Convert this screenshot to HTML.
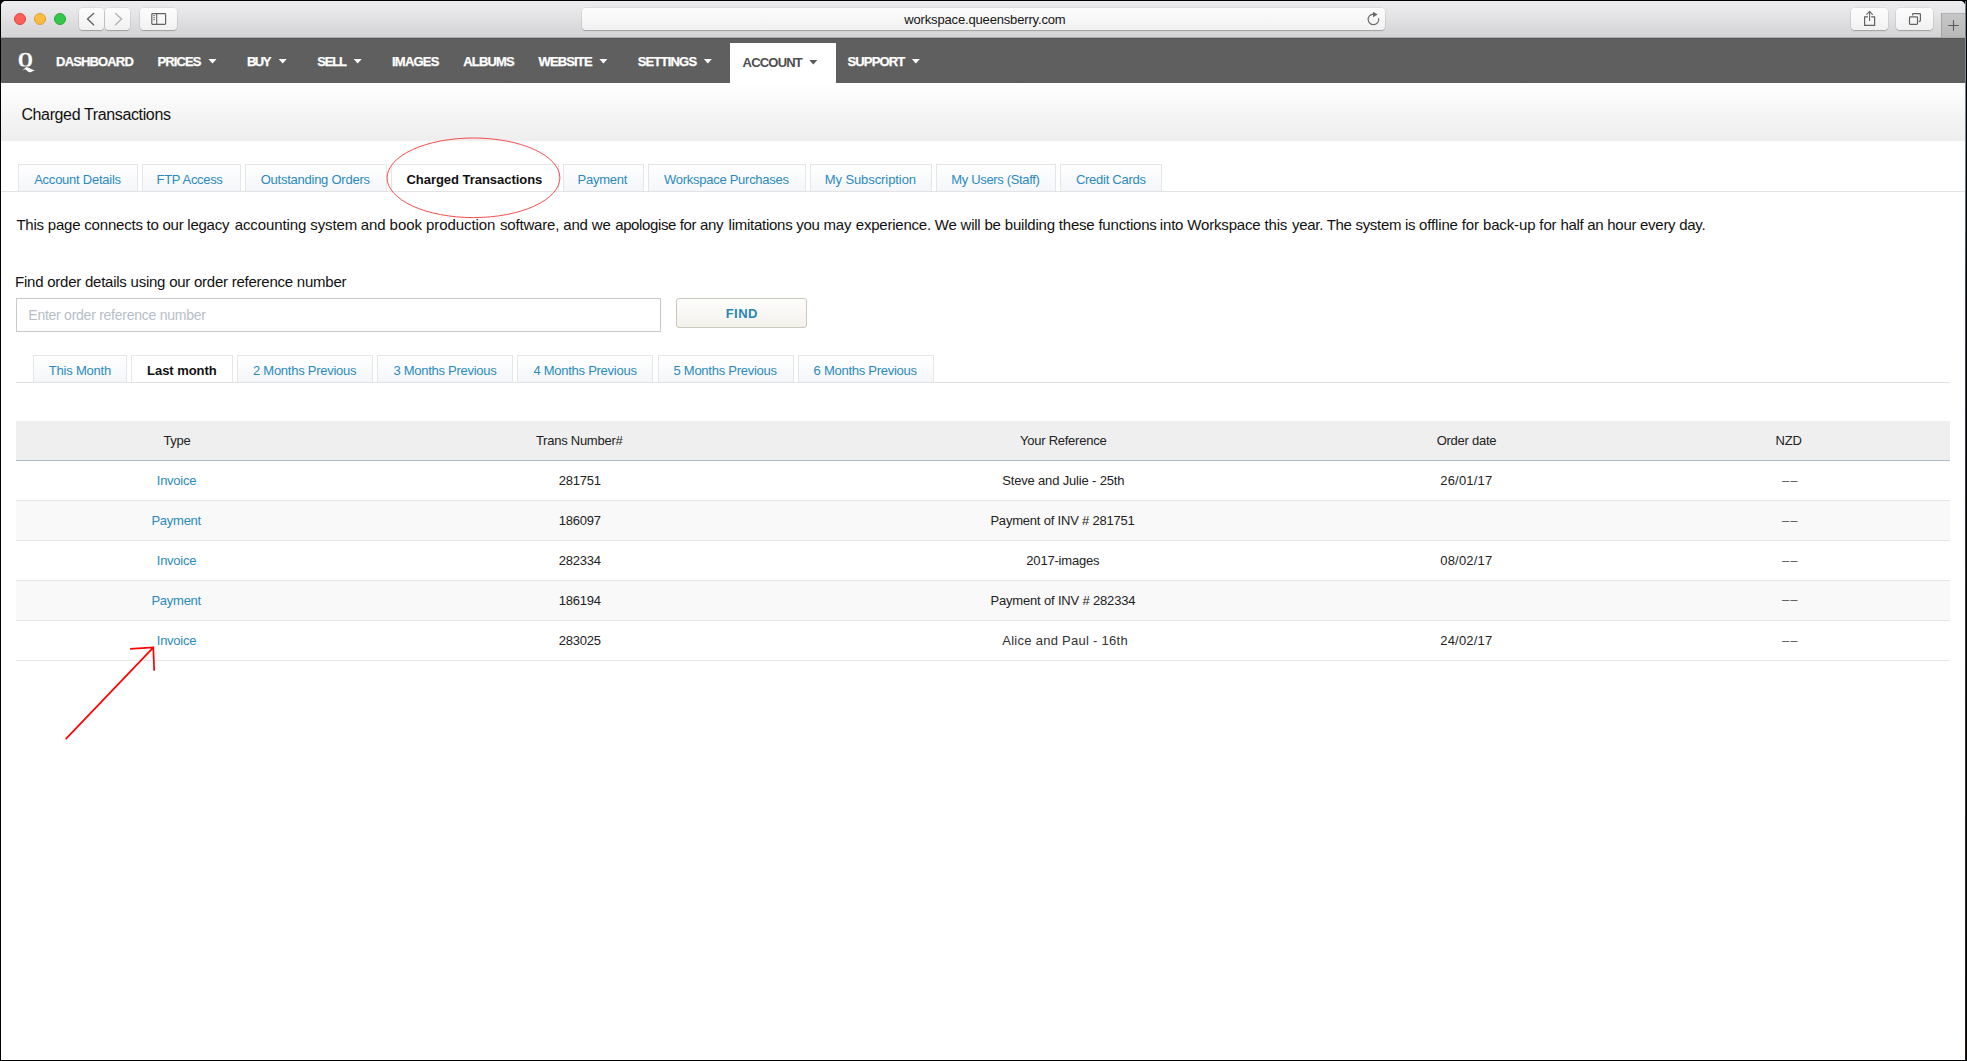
<!DOCTYPE html>
<html lang="en">
<head>
<meta charset="utf-8">
<title>Charged Transactions</title>
<style>
html,body{margin:0;padding:0;}
body{width:1967px;height:1061px;background:#000;position:relative;overflow:hidden;font-family:"Liberation Sans",sans-serif;}
.abs,.t,.win,.win div,.win svg{position:absolute;}
.t{white-space:nowrap;display:block;}
.win{left:1px;top:1px;width:1964px;height:1059px;background:#fff;border-radius:5px 5px 0 0;overflow:hidden;}
.edge{left:1965px;top:1px;width:1px;height:1059px;background:linear-gradient(#6f86a6 0,#6f86a6 140px,#3c4656 300px,#2a2a30 900px,#2a1a10 100%);}
.toolbar{left:0;top:0;width:1964px;height:36px;background:linear-gradient(#ececee 0,#e8e8ea 25%,#dbdbdd 70%,#d3d3d5 100%);border-bottom:1px solid #acacac;}
.tb-btn{background:linear-gradient(#fdfdfd,#f1f1f1);border-radius:4px;box-shadow:0 0 0 .5px rgba(0,0,0,.10),0 1px 1px rgba(0,0,0,.22);}
.dot{width:12px;height:12px;border-radius:50%;box-sizing:border-box;top:12px;}
.nav{left:0;top:37px;width:1964px;height:45px;background:#5f5f5f;border-top:1px solid #555;box-sizing:border-box;}
.titleband{left:0;top:82px;width:1964px;height:58px;background:linear-gradient(#ffffff 0,#fbfbfb 25%,#f2f2f2 70%,#eeeeee 100%);}
.tab{box-sizing:border-box;border:1px solid #e4e6e8;border-bottom:none;background:linear-gradient(#ffffff,#f4f6f9);top:163px;height:27px;}
.tab.on{background:#fff;}
.mtab{box-sizing:border-box;border:1px solid #e4e6e8;border-bottom:none;background:linear-gradient(#ffffff,#f4f6f9);top:354px;height:27px;}
.mtab.on{background:#fff;}
.hr{height:1px;background:#e3e3e3;}
</style>
</head>
<body>
<div class="win">
  <!-- Safari toolbar -->
  <div class="toolbar"></div>
  <div class="dot" style="left:13px;background:#fc605b;border:1px solid #e0443e;"></div>
  <div class="dot" style="left:33px;background:#fdbc40;border:1px solid #dea033;"></div>
  <div class="dot" style="left:53px;background:#34c84a;border:1px solid #27aa35;"></div>
  <div class="tb-btn" style="left:78px;top:7px;width:25px;height:22px;"></div>
  <div class="tb-btn" style="left:104px;top:7px;width:25px;height:22px;"></div>
  <div class="tb-btn" style="left:139px;top:7px;width:37px;height:22px;"></div>
  <div class="tb-btn" style="left:581px;top:7px;width:803px;height:22px;"></div>
  <div class="tb-btn" style="left:1850px;top:7px;width:37px;height:22px;"></div>
  <div class="tb-btn" style="left:1895px;top:7px;width:37px;height:22px;"></div>
  <div style="left:1940px;top:12px;width:24px;height:24px;background:linear-gradient(#c6c6c7,#b9b9ba);border-left:1px solid #a6a6a6;border-top:1px solid #b2b2b2;box-sizing:border-box;"></div>
  <svg style="left:0;top:0" width="1964" height="37" viewBox="1 1 1964 37" fill="none" stroke-linecap="round" stroke-linejoin="round">
    <!-- back / forward -->
    <path d="M93.6 13.5 L87.5 19 L93.6 24.8" stroke="#636363" stroke-width="1.4"/>
    <path d="M115.5 13.5 L121.6 19 L115.5 24.8" stroke="#b4b4b4" stroke-width="1.4"/>
    <!-- sidebar -->
    <rect x="151.8" y="13.7" width="13.8" height="10.7" rx="0.8" stroke="#636363" stroke-width="1.2"/>
    <path d="M156.7 13.7 V24.4" stroke="#636363" stroke-width="1.1"/>
    <path d="M153.3 15.6 H155 M153.3 17.6 H155 M153.3 19.6 H155" stroke="#636363" stroke-width="0.9" stroke-linecap="butt"/>
    <!-- reload -->
    <path d="M1378.7 18.6 A5.3 5.3 0 1 1 1373.2 14.1" stroke="#666" stroke-width="1.1"/>
    <path d="M1373 11.8 L1377.6 14.6 L1373 17.2 Z" fill="#666" stroke="none"/>
    <!-- share -->
    <path d="M1867.5 16.8 H1864.6 V25.3 H1874.6 V16.8 H1871.6" stroke="#636363" stroke-width="1.2" stroke-linejoin="miter"/>
    <path d="M1869.6 20.6 V11.6 M1866.8 14.3 L1869.6 11.4 L1872.4 14.3" stroke="#636363" stroke-width="1.1"/>
    <!-- tabs -->
    <rect x="1909.5" y="16.9" width="8" height="7.5" rx="0.8" stroke="#636363" stroke-width="1.2"/>
    <path d="M1912.6 15 V14.4 Q1912.6 13.6 1913.4 13.6 H1919.6 Q1920.4 13.6 1920.4 14.4 V20.6 Q1920.4 21.4 1919.6 21.4 H1919.2" stroke="#636363" stroke-width="1.2"/>
    <!-- plus -->
    <path d="M1948.2 25.5 H1958.8 M1953.5 20.2 V30.8" stroke="#5a5a5a" stroke-width="1.1" stroke-linecap="butt"/>
  </svg>

  <!-- site nav -->
  <div class="nav"></div>
  <div style="left:729px;top:42px;width:106px;height:40px;background:#fff;"></div>
  <span class="t" style="left:17.1px;top:44px;font-family:'Liberation Serif',serif;font-weight:700;font-size:20.5px;line-height:30px;color:#fff;transform:scaleX(.93);transform-origin:0 0;clip-path:inset(0 0 8.4px 0);-webkit-text-stroke:0.3px #fff;">Q</span>

  <svg style="left:0;top:0" width="1964" height="90" viewBox="1 1 1964 90">
    <path d="M22.2 70.9 Q24.2 68.2 26.2 66.9 Q28.8 67.4 31 69 Q33 70 34.9 70.3 Q32.5 71.5 30.6 72.2 Q29 72.7 27.6 71.3 Q26.2 69.6 25 69.3 Q24 69.4 22.2 70.9 Z" fill="#fff"/>
    <path d="M208.5 59 h8 l-4 4.6 z" fill="#fff"/>
    <path d="M278.7 59 h8 l-4 4.6 z" fill="#fff"/>
    <path d="M353.7 59 h8 l-4 4.6 z" fill="#fff"/>
    <path d="M599.4 59 h8 l-4 4.6 z" fill="#fff"/>
    <path d="M703.8 59 h8 l-4 4.6 z" fill="#fff"/>
    <path d="M809.3 60 h8 l-4 4.6 z" fill="#595959"/>
    <path d="M911.8 59 h8 l-4 4.6 z" fill="#fff"/>
  </svg>

  <!-- title band -->
  <div class="titleband"></div>

  <!-- account tabs -->
  <div class="hr" style="left:0;top:190px;width:1964px;"></div>
  <div class="tab" style="left:17px;width:120px;"></div>
  <div class="tab" style="left:141px;width:99px;"></div>
  <div class="tab" style="left:244px;width:142px;"></div>
  <div class="tab on" style="left:390px;width:168px;"></div>
  <div class="tab" style="left:562px;width:81px;"></div>
  <div class="tab" style="left:647px;width:158px;"></div>
  <div class="tab" style="left:809px;width:122px;"></div>
  <div class="tab" style="left:935px;width:120px;"></div>
  <div class="tab" style="left:1059px;width:102px;"></div>

  <!-- search -->
  <div style="left:15px;top:297px;width:645px;height:34px;box-sizing:border-box;border:1px solid #c9c9c9;background:#fff;"></div>
  <div style="left:675px;top:297px;width:131px;height:30px;box-sizing:border-box;border:1px solid #cbc7bb;border-radius:3px;background:linear-gradient(#fefefd,#f3f1ec);"></div>

  <!-- month tabs -->
  <div class="hr" style="left:15px;top:381px;width:1934px;"></div>
  <div class="mtab" style="left:32px;width:94px;"></div>
  <div class="mtab on" style="left:130px;width:102px;"></div>
  <div class="mtab" style="left:236px;width:136px;"></div>
  <div class="mtab" style="left:376px;width:136px;"></div>
  <div class="mtab" style="left:516px;width:136px;"></div>
  <div class="mtab" style="left:657px;width:136px;"></div>
  <div class="mtab" style="left:797px;width:136px;"></div>

  <!-- table -->
  <div style="left:15px;top:420px;width:1934px;height:39px;background:#efefef;border-bottom:1px solid #b4bcc6;"></div>
  <div style="left:15px;top:500px;width:1934px;height:39px;background:#f9f9f9;"></div>
  <div style="left:15px;top:580px;width:1934px;height:39px;background:#f9f9f9;"></div>
  <div class="hr" style="left:15px;top:499px;width:1934px;background:#e6e6e6;"></div>
  <div class="hr" style="left:15px;top:539px;width:1934px;background:#e6e6e6;"></div>
  <div class="hr" style="left:15px;top:579px;width:1934px;background:#e6e6e6;"></div>
  <div class="hr" style="left:15px;top:619px;width:1934px;background:#e6e6e6;"></div>
  <div class="hr" style="left:15px;top:659px;width:1934px;background:#e6e6e6;"></div>

  <!-- annotations -->
  <svg style="left:0;top:0" width="1964" height="1059" viewBox="1 1 1964 1059" fill="none">
    <ellipse cx="473.5" cy="177.8" rx="86.4" ry="39.8" stroke="#f24545" stroke-width="0.95"/>
    <path d="M65.7 739.1 L153.2 647.6 M130.1 648.9 L153.3 647.4 L154.2 670.8" stroke="#ff0000" stroke-width="1.7" stroke-linejoin="miter"/>
  </svg>
</div>
<div class="abs edge"></div>
<div id="text" class="abs" style="left:0;top:0;width:0;height:0;">
<span class="t" style="left:904.30px;top:11px;font-size:13px;line-height:18px;font-weight:400;color:#141414;letter-spacing:-0.162px">workspace.queensberry.com</span>
<span class="t" style="left:56.10px;top:53px;font-size:13px;line-height:18px;font-weight:700;color:#ffffff;letter-spacing:-0.851px;-webkit-text-stroke:.25px #fff">DASHBOARD</span>
<span class="t" style="left:157.50px;top:53px;font-size:13px;line-height:18px;font-weight:700;color:#ffffff;letter-spacing:-0.906px;-webkit-text-stroke:.25px #fff">PRICES</span>
<span class="t" style="left:247.00px;top:53px;font-size:13px;line-height:18px;font-weight:700;color:#ffffff;letter-spacing:-1.538px;-webkit-text-stroke:.25px #fff">BUY</span>
<span class="t" style="left:317.20px;top:53px;font-size:13px;line-height:18px;font-weight:700;color:#ffffff;letter-spacing:-1.194px;-webkit-text-stroke:.25px #fff">SELL</span>
<span class="t" style="left:392.00px;top:53px;font-size:13px;line-height:18px;font-weight:700;color:#ffffff;letter-spacing:-0.782px;-webkit-text-stroke:.25px #fff">IMAGES</span>
<span class="t" style="left:463.30px;top:53px;font-size:13px;line-height:18px;font-weight:700;color:#ffffff;letter-spacing:-0.847px;-webkit-text-stroke:.25px #fff">ALBUMS</span>
<span class="t" style="left:538.60px;top:53px;font-size:13px;line-height:18px;font-weight:700;color:#ffffff;letter-spacing:-0.875px;-webkit-text-stroke:.25px #fff">WEBSITE</span>
<span class="t" style="left:637.70px;top:53px;font-size:13px;line-height:18px;font-weight:700;color:#ffffff;letter-spacing:-0.805px;-webkit-text-stroke:.25px #fff">SETTINGS</span>
<span class="t" style="left:847.50px;top:53px;font-size:13px;line-height:18px;font-weight:700;color:#ffffff;letter-spacing:-0.850px;-webkit-text-stroke:.25px #fff">SUPPORT</span>
<span class="t" style="left:742.60px;top:54px;font-size:13px;line-height:18px;font-weight:700;color:#4d4d4d;letter-spacing:-0.809px">ACCOUNT</span>
<span class="t" style="left:21.40px;top:104px;font-size:16px;line-height:22px;font-weight:400;color:#111;letter-spacing:-0.369px">Charged Transactions</span>
<span class="t" style="left:34.20px;top:171px;font-size:13px;line-height:18px;font-weight:400;color:#2b8abd;letter-spacing:-0.244px">Account Details</span>
<span class="t" style="left:156.60px;top:171px;font-size:13px;line-height:18px;font-weight:400;color:#2b8abd;letter-spacing:-0.318px">FTP Access</span>
<span class="t" style="left:260.70px;top:171px;font-size:13px;line-height:18px;font-weight:400;color:#2b8abd;letter-spacing:-0.244px">Outstanding Orders</span>
<span class="t" style="left:577.60px;top:171px;font-size:13px;line-height:18px;font-weight:400;color:#2b8abd;letter-spacing:-0.248px">Payment</span>
<span class="t" style="left:664.00px;top:171px;font-size:13px;line-height:18px;font-weight:400;color:#2b8abd;letter-spacing:-0.268px">Workspace Purchases</span>
<span class="t" style="left:824.70px;top:171px;font-size:13px;line-height:18px;font-weight:400;color:#2b8abd;letter-spacing:-0.082px">My Subscription</span>
<span class="t" style="left:951.30px;top:171px;font-size:13px;line-height:18px;font-weight:400;color:#2b8abd;letter-spacing:-0.342px">My Users (Staff)</span>
<span class="t" style="left:1075.90px;top:171px;font-size:13px;line-height:18px;font-weight:400;color:#2b8abd;letter-spacing:-0.261px">Credit Cards</span>
<span class="t" style="left:406.50px;top:171px;font-size:13px;line-height:18px;font-weight:700;color:#111;letter-spacing:-0.037px">Charged Transactions</span>
<span class="t" style="left:16.40px;top:214px;font-size:15px;line-height:21px;font-weight:400;color:#111;letter-spacing:-0.210px">This page connects</span>
<span class="t" style="left:146.60px;top:214px;font-size:15px;line-height:21px;font-weight:400;color:#111;letter-spacing:-0.257px">to our legacy</span>
<span class="t" style="left:234.70px;top:214px;font-size:15px;line-height:21px;font-weight:400;color:#111;letter-spacing:-0.102px">accounting system</span>
<span class="t" style="left:360.70px;top:214px;font-size:15px;line-height:21px;font-weight:400;color:#111;letter-spacing:-0.066px">and book production</span>
<span class="t" style="left:499.90px;top:214px;font-size:15px;line-height:21px;font-weight:400;color:#111;letter-spacing:-0.170px">software, and we</span>
<span class="t" style="left:615.20px;top:214px;font-size:15px;line-height:21px;font-weight:400;color:#111;letter-spacing:-0.378px">apologise for any</span>
<span class="t" style="left:728.60px;top:214px;font-size:15px;line-height:21px;font-weight:400;color:#111;letter-spacing:-0.264px">limitations you may</span>
<span class="t" style="left:855.80px;top:214px;font-size:15px;line-height:21px;font-weight:400;color:#111;letter-spacing:-0.226px">experience. We will be</span>
<span class="t" style="left:1004.80px;top:214px;font-size:15px;line-height:21px;font-weight:400;color:#111;letter-spacing:-0.208px">building these functions</span>
<span class="t" style="left:1159.80px;top:214px;font-size:15px;line-height:21px;font-weight:400;color:#111;letter-spacing:-0.173px">into Workspace this</span>
<span class="t" style="left:1292.10px;top:214px;font-size:15px;line-height:21px;font-weight:400;color:#111;letter-spacing:-0.306px">year. The system is</span>
<span class="t" style="left:1419.00px;top:214px;font-size:15px;line-height:21px;font-weight:400;color:#111;letter-spacing:-0.138px">offline for back-up for</span>
<span class="t" style="left:1560.40px;top:214px;font-size:15px;line-height:21px;font-weight:400;color:#111;letter-spacing:-0.287px">half an hour every day.</span>
<span class="t" style="left:15.10px;top:271px;font-size:15px;line-height:21px;font-weight:400;color:#111;letter-spacing:-0.242px">Find order details using our order reference number</span>
<span class="t" style="left:28.30px;top:305px;font-size:14px;line-height:20px;font-weight:400;color:#b7bec8;letter-spacing:-0.254px">Enter order reference number</span>
<span class="t" style="left:725.70px;top:305px;font-size:13px;line-height:18px;font-weight:700;color:#2a86b8;letter-spacing:0.453px">FIND</span>
<span class="t" style="left:48.80px;top:362px;font-size:13px;line-height:18px;font-weight:400;color:#2b8abd;letter-spacing:-0.208px">This Month</span>
<span class="t" style="left:253.00px;top:362px;font-size:13px;line-height:18px;font-weight:400;color:#2b8abd;letter-spacing:-0.260px">2 Months Previous</span>
<span class="t" style="left:393.40px;top:362px;font-size:13px;line-height:18px;font-weight:400;color:#2b8abd;letter-spacing:-0.266px">3 Months Previous</span>
<span class="t" style="left:533.40px;top:362px;font-size:13px;line-height:18px;font-weight:400;color:#2b8abd;letter-spacing:-0.260px">4 Months Previous</span>
<span class="t" style="left:673.50px;top:362px;font-size:13px;line-height:18px;font-weight:400;color:#2b8abd;letter-spacing:-0.260px">5 Months Previous</span>
<span class="t" style="left:813.60px;top:362px;font-size:13px;line-height:18px;font-weight:400;color:#2b8abd;letter-spacing:-0.266px">6 Months Previous</span>
<span class="t" style="left:147.10px;top:362px;font-size:13px;line-height:18px;font-weight:700;color:#111;letter-spacing:-0.057px">Last month</span>
<span class="t" style="left:163.40px;top:432px;font-size:13px;line-height:18px;font-weight:400;color:#222;letter-spacing:-0.250px">Type</span>
<span class="t" style="left:535.90px;top:432px;font-size:13px;line-height:18px;font-weight:400;color:#222;letter-spacing:-0.250px">Trans Number#</span>
<span class="t" style="left:1020.01px;top:432px;font-size:13px;line-height:18px;font-weight:400;color:#222;letter-spacing:-0.250px">Your Reference</span>
<span class="t" style="left:1436.67px;top:432px;font-size:13px;line-height:18px;font-weight:400;color:#222;letter-spacing:-0.250px">Order date</span>
<span class="t" style="left:1775.59px;top:432px;font-size:13px;line-height:18px;font-weight:400;color:#222;letter-spacing:-0.250px">NZD</span>
<span class="t" style="left:156.77px;top:472px;font-size:13px;line-height:18px;font-weight:400;color:#2b8abd;letter-spacing:-0.250px">Invoice</span>
<span class="t" style="left:558.75px;top:472px;font-size:13px;line-height:18px;font-weight:400;color:#222;letter-spacing:-0.250px">281751</span>
<span class="t" style="left:1002.20px;top:472px;font-size:13px;line-height:18px;font-weight:400;color:#222;letter-spacing:-0.167px">Steve and Julie - 25th</span>
<span class="t" style="left:1440.30px;top:472px;font-size:13px;line-height:18px;font-weight:400;color:#222;letter-spacing:0.175px">26/01/17</span>
<span class="t" style="left:1782.05px;top:472px;font-size:13px;line-height:18px;font-weight:400;color:#5a5a5a;letter-spacing:1.070px">––</span>
<span class="t" style="left:151.41px;top:512px;font-size:13px;line-height:18px;font-weight:400;color:#2b8abd;letter-spacing:-0.250px">Payment</span>
<span class="t" style="left:558.75px;top:512px;font-size:13px;line-height:18px;font-weight:400;color:#222;letter-spacing:-0.250px">186097</span>
<span class="t" style="left:990.40px;top:512px;font-size:13px;line-height:18px;font-weight:400;color:#222;letter-spacing:-0.202px">Payment of INV # 281751</span>
<span class="t" style="left:1782.05px;top:512px;font-size:13px;line-height:18px;font-weight:400;color:#5a5a5a;letter-spacing:1.070px">––</span>
<span class="t" style="left:156.77px;top:552px;font-size:13px;line-height:18px;font-weight:400;color:#2b8abd;letter-spacing:-0.250px">Invoice</span>
<span class="t" style="left:558.75px;top:552px;font-size:13px;line-height:18px;font-weight:400;color:#222;letter-spacing:-0.250px">282334</span>
<span class="t" style="left:1026.30px;top:552px;font-size:13px;line-height:18px;font-weight:400;color:#222;letter-spacing:-0.186px">2017-images</span>
<span class="t" style="left:1440.30px;top:552px;font-size:13px;line-height:18px;font-weight:400;color:#222;letter-spacing:0.175px">08/02/17</span>
<span class="t" style="left:1782.05px;top:552px;font-size:13px;line-height:18px;font-weight:400;color:#5a5a5a;letter-spacing:1.070px">––</span>
<span class="t" style="left:151.41px;top:592px;font-size:13px;line-height:18px;font-weight:400;color:#2b8abd;letter-spacing:-0.250px">Payment</span>
<span class="t" style="left:558.75px;top:592px;font-size:13px;line-height:18px;font-weight:400;color:#222;letter-spacing:-0.250px">186194</span>
<span class="t" style="left:990.40px;top:592px;font-size:13px;line-height:18px;font-weight:400;color:#222;letter-spacing:-0.170px">Payment of INV # 282334</span>
<span class="t" style="left:1782.05px;top:591px;font-size:13px;line-height:18px;font-weight:400;color:#5a5a5a;letter-spacing:1.070px">––</span>
<span class="t" style="left:156.77px;top:632px;font-size:13px;line-height:18px;font-weight:400;color:#2b8abd;letter-spacing:-0.250px">Invoice</span>
<span class="t" style="left:558.75px;top:632px;font-size:13px;line-height:18px;font-weight:400;color:#222;letter-spacing:-0.250px">283025</span>
<span class="t" style="left:1002.20px;top:632px;font-size:13px;line-height:18px;font-weight:400;color:#333;letter-spacing:0.278px">Alice and Paul - 16th</span>
<span class="t" style="left:1440.30px;top:632px;font-size:13px;line-height:18px;font-weight:400;color:#222;letter-spacing:0.175px">24/02/17</span>
<span class="t" style="left:1782.05px;top:632px;font-size:13px;line-height:18px;font-weight:400;color:#5a5a5a;letter-spacing:1.070px">––</span>
</div>
</body>
</html>
